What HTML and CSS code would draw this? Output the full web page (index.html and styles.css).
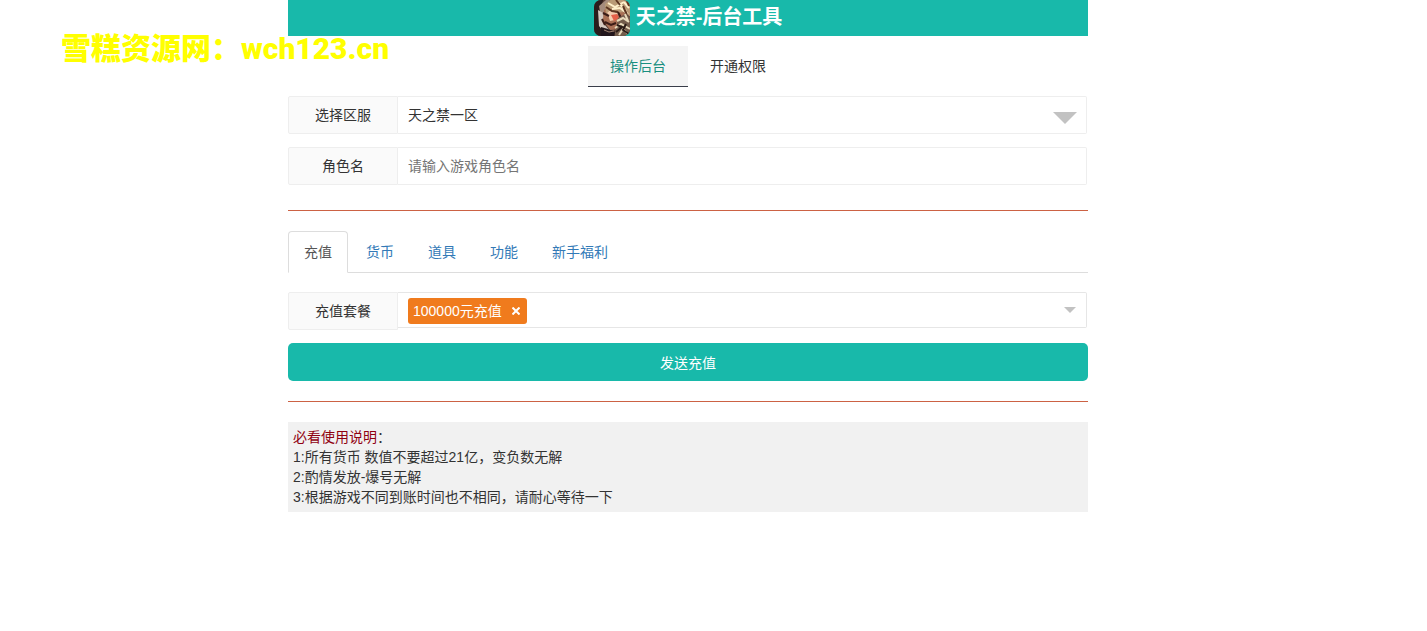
FILE: index.html
```html
<!DOCTYPE html>
<html lang="zh-CN">
<head>
<meta charset="utf-8">
<title>天之禁-后台工具</title>
<link rel="stylesheet" href="styles.css">
</head>
<body>
<div class="watermark">雪糕资源网：wch123.cn</div>
<main class="page">
  <header class="header">
    <svg class="logo" viewBox="0 0 36 36" aria-hidden="true">
      <defs>
        <clipPath id="logo-clip"><rect width="36" height="36" rx="7"/></clipPath>
        <filter id="logo-soft"><feGaussianBlur stdDeviation="0.7"/></filter>
      </defs>
      <g clip-path="url(#logo-clip)">
        <rect width="36" height="36" fill="#5a4038"/>
        <g filter="url(#logo-soft)">
          <path d="M-2-2h12L5 12l3 10 5 16H-2z" fill="#2b1b1a"/>
          <path d="M5 6l7-6h4l-5 10 2 10-6-3z" fill="#a58c7d"/>
          <path d="M4 10l5 3 1 11 6 7-4 3-7-8z" fill="#d6c9c1"/>
          <path d="M10 10l9-6 10 3 3 10-7 12-9 1-7-10z" fill="#a96f55"/>
          <path d="M13 12l6-3 5 4-3 7-5 1z" fill="#f4cdb0"/>
          <path d="M17 15l6-1 2 4-5 3z" fill="#e4604a"/>
          <path d="M11 4l8-6h19v20l-8-6-8 1-5-4-5 5z" fill="#b99a76"/>
          <path d="M14 3l7 4 9-5M18 9l8-1 8 6M25 3l7 8M30 2l5 6" stroke="#fff0cc" stroke-width="2" fill="none"/>
          <path d="M12 7l6 4 6 1M22 0l4 5M29 6l4 9M33 1l2 5" stroke="#5b3520" stroke-width="2" fill="none"/>
          <path d="M9 13l6 3M11 22l6 3 5-2M8 19l3 6M24 12l3 6-3 5" stroke="#3b1a18" stroke-width="2" fill="none"/>
          <path d="M24 18l7-4 7 5v19H20z" fill="#735c4c"/>
          <path d="M23 21l6-3 6 4M21 28l6-4 9 5M25 35l4-6 5 5M31 14l3 7" stroke="#e8dabb" stroke-width="2" fill="none"/>
          <path d="M23 25l5 2-6 5M32 24l-3 6 6 4" stroke="#2c1d19" stroke-width="2" fill="none"/>
          <path d="M7 27l7 2 7 3-1 6H7z" fill="#24191a"/>
          <path d="M10 30l5 2 5-1" stroke="#9f8272" fill="none"/>
        </g>
      </g>
    </svg>
    <h1 class="title">天之禁-后台工具</h1>
  </header>

  <nav class="modes">
    <a class="mode mode-active" href="#admin">操作后台</a>
    <a class="mode" href="#grant">开通权限</a>
  </nav>

  <div class="field">
    <label class="field-label" for="server">选择区服</label>
    <div class="field-box">
      <select class="control" id="server"><option>天之禁一区</option></select>
      <svg class="arrow arrow-large" viewBox="0 0 24 12" aria-hidden="true"><path d="M0 0h24L12 12z"/></svg>
    </div>
  </div>
  <div class="field">
    <label class="field-label" for="role">角色名</label>
    <div class="field-box">
      <input class="control" id="role" type="text" placeholder="请输入游戏角色名">
    </div>
  </div>

  <hr class="divider">

  <nav class="tabs">
    <a class="tab tab-active" href="#recharge">充值</a>
    <a class="tab" href="#currency">货币</a>
    <a class="tab" href="#items">道具</a>
    <a class="tab" href="#functions">功能</a>
    <a class="tab" href="#welfare">新手福利</a>
  </nav>

  <div class="field field-package">
    <label class="field-label" for="package">充值套餐</label>
    <div class="field-box package-box">
      <span class="tag">100000元充值
        <button class="tag-remove" type="button" aria-label="移除">
          <svg class="cross" viewBox="0 0 8 8" aria-hidden="true"><path d="M0.500 0.500l7 7M7.500 0.500l-7 7"/></svg>
        </button>
      </span>
      <input class="control package-input" id="package" type="text">
      <svg class="arrow arrow-small" viewBox="0 0 12 6" aria-hidden="true"><path d="M0 0h12L6 6z"/></svg>
    </div>
  </div>

  <button class="submit" type="button">发送充值</button>

  <hr class="divider">

  <section class="notes">
    <p><span class="notes-title">必看使用说明</span>：</p>
    <p>1:所有货币 数值不要超过21亿，变负数无解</p>
    <p>2:酌情发放-爆号无解</p>
    <p>3:根据游戏不同到账时间也不相同，请耐心等待一下</p>
  </section>
</main>
</body>
</html>
```
FILE: styles.css
```css
* {
  box-sizing: border-box;
}

body {
  margin: 0;
  padding-right: 51px;
  background: #fff;
  color: #333;
  font: 14px/20px "Liberation Sans", "Noto Sans CJK SC", sans-serif;
}

button,
input,
select {
  font: inherit;
  color: inherit;
}

a {
  text-decoration: none;
}

p {
  margin: 0;
}

.watermark {
  position: absolute;
  top: 29px;
  left: 61px;
  color: #ff0;
  font: 900 30px/40px Roboto, "Noto Sans CJK SC", sans-serif;
  white-space: nowrap;
}

.page {
  max-width: 800px;
  margin: 0 auto;
}

.header {
  display: flex;
  justify-content: center;
  gap: 6px;
  height: 36px;
  background: #18b9aa;
  color: #fff;
}

.logo {
  width: 36px;
  height: 36px;
}

.title {
  margin: 0;
  font-size: 20px;
  line-height: 34px;
}

.modes {
  display: flex;
  justify-content: center;
  margin: 10px 0 9px;
}

.mode {
  width: 100px;
  border-bottom: 1px solid transparent;
  color: #333;
  line-height: 40px;
  text-align: center;
}

.mode-active {
  border-bottom-color: #393d49;
  background: #f4f4f4;
  color: #1a8f80;
}

.field {
  display: flex;
  align-items: flex-start;
  margin: 0 1px 13px 0;
}

.field-label {
  width: 110px;
  border: 1px solid #eee;
  border-radius: 2px 0 0 2px;
  background: #fafafa;
  line-height: 36px;
  text-align: center;
}

.field-box {
  position: relative;
  display: flex;
  flex: 1;
  align-items: center;
  height: 38px;
  border: 1px solid #eee;
  border-left: 0;
  border-radius: 0 2px 2px 0;
}

.control {
  flex: 1;
  min-width: 0;
  height: 36px;
  padding: 0 10px;
  border: 0;
  background: transparent;
  appearance: none;
  outline: 0;
}

.control::placeholder {
  color: #757575;
}

.arrow {
  position: absolute;
  right: 10px;
  fill: #c2c2c2;
  pointer-events: none;
}

.arrow-large {
  top: 15px;
  right: 9px;
  width: 24px;
  height: 12px;
}

.arrow-small {
  top: 14px;
  width: 12px;
  height: 6px;
}

.divider {
  height: 1px;
  margin: 25px 0 20px;
  border: 0;
  background: #cc6244;
}

.tabs {
  display: flex;
  gap: 2px;
  margin-bottom: 19px;
  border-bottom: 1px solid #ddd;
}

.tab {
  margin-bottom: -1px;
  padding: 10px 15px;
  border: 1px solid transparent;
  border-radius: 4px 4px 0 0;
  color: #337ab7;
}

.tab-active {
  border-color: #ddd #ddd #fff;
  background: #fff;
  color: #555;
}

.package-box {
  align-items: flex-start;
  height: 36px;
  border-color: #e6e6e6;
}

.package-input {
  height: 34px;
}

.tag {
  display: flex;
  align-items: center;
  gap: 10px;
  height: 26px;
  margin: 5px 0 0 10px;
  padding: 0 7px 0 5px;
  border-radius: 3px;
  background: #f07b1d;
  color: #fff;
}

.tag-remove {
  display: flex;
  padding: 0;
  border: 0;
  background: transparent;
}

.cross {
  width: 8px;
  height: 8px;
  fill: none;
  stroke: #fff;
  stroke-width: 2;
}

.submit {
  width: 100%;
  height: 38px;
  padding: 2px 0 0;
  border: 0;
  border-radius: 5px;
  background: #18b9aa;
  color: #fff;
}

.submit + .divider {
  margin-top: 20px;
}

.notes {
  padding: 5px;
  background: #f1f1f1;
}

.notes-title {
  color: #900010;
}
```
